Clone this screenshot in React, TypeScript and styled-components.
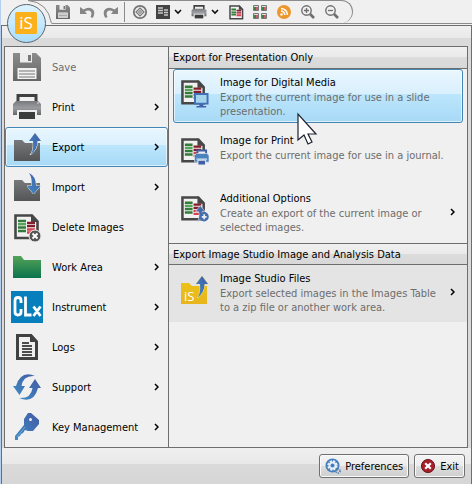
import React from 'react';
import styled, { createGlobalStyle, css } from 'styled-components';

const GlobalStyle = createGlobalStyle`
  * { box-sizing: border-box; }
  body { margin: 0; background: #f0f0f0; }
  body, button { font-family: "DejaVu Sans Condensed", "Noto Sans", sans-serif; font-size: 11px; color: #000; }
  svg { display: block; flex: none; }
`;

const line = '#6e6e6e';

const Window = styled.div`
  position: relative;
  display: flex;
  flex-direction: column;
  min-height: 100vh;
  background: #f0f0f0;
  border-left: 1px solid #b5d0ee;
  overflow: hidden;
`;

const TopBar = styled.header`
  display: flex;
  padding-left: 27px;
`;

const Toolbar = styled.div`
  flex: 1;
  height: 24px;
  border-bottom: 1px solid #8c8c8c;
`;

const Tools = styled.div`
  display: flex;
  align-items: center;
  width: 301px;
  height: 23px;
  padding-left: 3px;
  border: 1px solid #8c8c8c;
  border-left: 0;
  border-bottom: 0;
  border-radius: 0 12px 12px 0;
`;

const ToolButton = styled.button<{ $width?: number }>`
  display: flex;
  align-items: center;
  justify-content: flex-start;
  gap: 4px;
  width: ${(p) => p.$width ?? 24}px;
  height: 22px;
  padding: 0;
  border: 0;
  background: none;
`;

const Separator = styled.span`
  width: 1px;
  height: 20px;
  margin: 0 7px 0 0;
  background: #8a8a8a;
`;

const OrbButton = styled.button`
  position: absolute;
  left: 6px;
  top: 4px;
  padding: 0;
  border: 0;
  border-radius: 50%;
  background: none;
`;

const Panel = styled.div`
  display: flex;
  flex: 1;
  flex-direction: column;
  margin-top: 1px;
  padding: 0 3px 0 2px;
  border: 1px solid ${line};
  border-bottom: 0;
  background: linear-gradient(#f0f0f0, #e9e9e9 12px, #dadada 12px, #dadada 422px, #efefef 422px, #e9e9e9 438px, #dadada 438px, #d6d6d6);
`;

const MenuFrame = styled.main`
  display: grid;
  grid-template-columns: 164px 1fr;
  margin-top: 20px;
  border: 1px solid ${line};
  background: #f0f0f0;
`;

const Commands = styled.nav`
  border-right: 1px solid ${line};
`;

const highlighted = css`
  border-color: #4486b8;
  background: linear-gradient(#e9f6fe, #d9f0fd 46%, #bce6fd 46%, #a7d9f5);
  box-shadow: inset 0 0 0 1px #ffffff99;
`;

const CommandButton = styled.button<{ $active?: boolean }>`
  display: flex;
  align-items: center;
  width: 100%;
  height: 40px;
  padding: 0 8px 0 5px;
  border: 1px solid transparent;
  border-radius: 3px;
  background: none;
  text-align: left;
  ${(p) => p.$active && highlighted}
  &:disabled { color: #6d6d6d; }
`;

const CommandLabel = styled.span`
  flex: 1;
  padding-left: 9px;
`;

const SectionTitle = styled.h2<{ $later?: boolean }>`
  margin: 0;
  padding: 0 4px;
  height: ${(p) => (p.$later ? 22 : 22)}px;
  border-top: ${(p) => (p.$later ? 1 : 0)}px solid ${line};
  border-bottom: 1px solid ${line};
  background: linear-gradient(#f0f0f0, #eaeaea 48%, #dcdcdc 48%, #d8d8d8);
  font-size: 11px;
  font-weight: normal;
  line-height: 21px;
`;

const OptionList = styled.div<{ $shaded?: boolean }>`
  display: flex;
  flex-direction: column;
  gap: 4px;
  padding: 0 4px ${(p) => (p.$shaded ? 3 : 4)}px;
  background: ${(p) => (p.$shaded ? '#e4e4e4' : 'transparent')};
`;

const OptionButton = styled.button<{ $active?: boolean }>`
  display: flex;
  align-items: flex-start;
  width: 100%;
  height: 54px;
  padding: 5px 7px 0;
  border: 1px solid transparent;
  border-radius: 3px;
  background: none;
  text-align: left;
  ${(p) => p.$active && highlighted}
`;

const OptionIcon = styled.span`
  padding-top: 5px;
`;

const OptionText = styled.span`
  flex: 1;
  padding-left: 11px;
`;

const OptionTitle = styled.span`
  display: block;
  line-height: 16px;
`;

const OptionDescription = styled.span`
  display: block;
  max-width: 228px;
  line-height: 14px;
  color: #6d6d6d;
`;

const OptionArrow = styled.span`
  align-self: center;
  height: 14px;
`;

const Footer = styled.footer`
  display: flex;
  justify-content: flex-end;
  gap: 5px;
  padding: 6px 3px;
`;

const FooterButton = styled.button`
  display: flex;
  align-items: center;
  gap: 4px;
  height: 24px;
  padding: 0 5px;
  border: 1px solid #707070;
  border-radius: 3px;
  background: linear-gradient(#f4f4f4, #ececec 50%, #dddddd 50%, #cfcfcf);
  box-shadow: inset 0 0 0 1px #fafafa;
  white-space: nowrap;
`;

const Pointer = styled.svg`
  position: absolute;
  left: 295px;
  top: 112px;
  pointer-events: none;
`;

const Chevron = ({ down }: { down?: boolean }) =>
  down ? (
    <svg width="8" height="6" viewBox="0 0 8 6"><path d="M1 1l3 3 3-3" fill="none" stroke="#111" strokeWidth="1.6" /></svg>
  ) : (
    <svg width="5" height="8" viewBox="0 0 5 8"><path d="M1 1l3 3-3 3" fill="none" stroke="#000" strokeWidth="1.5" /></svg>
  );

const ToolbarCurve = () => (
  <svg width="24" height="24" viewBox="0 0 24 24"><path d="M0 .5H24M0 .5Q20 2 23.500 23.500" fill="none" stroke="#8c8c8c" /></svg>
);

const Floppy = ({ size = 32 }: { size?: number }) => (
  <svg width={size} height={size} viewBox="0 0 32 32">
    <defs><linearGradient id="floppy" x2="0" y2="1"><stop stopColor="#8b8b8b" /><stop offset="1" stopColor="#666" /></linearGradient></defs>
    <path d="M2 2h23l5 5v23H2z" fill="url(#floppy)" />
    <path d="M9 2h12v9.500H9z" fill="#ededed" />
    <path d="M17 4h3v6h-3z" fill="#777" />
    <path d="M6.500 17h19v11h-19z" fill="#f2f2f2" />
    <path d="M8 20h16M8 23h16M8 26h16" stroke="#777" strokeWidth="1.200" />
  </svg>
);

const Printer = ({ small }: { small?: boolean }) => (
  <svg width={small ? 16 : 32} height={small ? 16 : 32} viewBox={small ? '1 2 30 28' : '0 0 32 32'}>
    <defs><linearGradient id="printer" x2="0" y2="1"><stop stopColor="#78797c" /><stop offset=".5" stopColor="#9b9c9f" /><stop offset="1" stopColor="#66676a" /></linearGradient></defs>
    <path d="M7 11V4.500h18V11" fill="none" stroke="#404040" strokeWidth="3" />
    <path d="M2 13l3-3h22l3 3v11H2z" fill="url(#printer)" />
    <path d="M6 19h20v5H6z" fill="#eee" />
    <path d="M8 21h16v7H8z" fill="#3b3d3c" />
    <path d="M26 12h2" stroke="#ddd" />
  </svg>
);

const FolderBase = ({ kind }: { kind: 'gray' | 'green' | 'yellow' }) => {
  const stops = { gray: ['#77797b', '#545555'], green: ['#55a258', '#0b744d'], yellow: ['#ecc118', '#e8b51d'] }[kind];
  const wide = kind === 'green';
  return (
    <>
      <defs><linearGradient id={`folder-${kind}`} x2="0" y2="1"><stop stopColor={stops[0]} /><stop offset="1" stopColor={stops[1]} /></linearGradient></defs>
      <path d={wide ? 'M2 5h8l3 4h17v18H2z' : 'M3 9h8l3 3h15v18H3z'} fill={`url(#folder-${kind})`} />
    </>
  );
};

const BlueGradient = ({ id }: { id: string }) => (
  <defs><linearGradient id={id} x1="0" y1="1" x2="1" y2="0"><stop stopColor="#408bc5" /><stop offset="1" stopColor="#425ba4" /></linearGradient></defs>
);

const ExportFolder = ({ yellow }: { yellow?: boolean }) => (
  <svg width={yellow ? 28 : 32} height={yellow ? 28 : 32} viewBox={yellow ? '3 2 28 28' : '0 0 32 32'}>
    <FolderBase kind={yellow ? 'yellow' : 'gray'} />
    <BlueGradient id="export-arrow" />
    <path d="M19 24q4-4 3-14H18l6-8 6 8h-3.500q0 9-7.500 14z" fill="url(#export-arrow)" stroke={yellow ? '#f4dd91' : '#f0f0f0'} strokeWidth="1" paintOrder="stroke" />
    {yellow && <text x="6" y="27" fill="#fff" fontFamily="Open Sans" fontSize="13">iS</text>}
  </svg>
);

const ImportFolder = () => (
  <svg width="32" height="32" viewBox="0 0 32 32">
    <FolderBase kind="gray" />
    <BlueGradient id="import-arrow" />
    <path d="M18 2q7 3 7 13h4.500l-7 8-6.500-8h4.500q1-8-2.500-13z" fill="url(#import-arrow)" stroke="#f0f0f0" strokeWidth="1" paintOrder="stroke" />
  </svg>
);

type Badge = 'none' | 'delete' | 'screen' | 'printer' | 'add';

const documentView = { 16: '1 2 28 26', 28: '3 3 29 29', 32: '0 0 32 32' };

const ImageDocument = ({ badge = 'none', size = 28 }: { badge?: Badge; size?: 16 | 28 | 32 }) => (
  <svg width={size} height={size} viewBox={documentView[size]}>
    <path d="M4.500 4.500H21l5.500 6V27h-22z" fill="#f1f1f1" stroke="#474747" strokeWidth="2.600" />
    <path d="M20 3l8 8h-8z" fill="#474747" />
    <path d="M7 10h8M7 16.500h8M7 20h8" stroke="#337b39" strokeWidth="2.600" />
    <path d="M7 13.200h8" stroke="#57a45a" strokeWidth="2.400" />
    <path d="M16 12h8M16 15.200h8" stroke="#841c2a" strokeWidth="2.300" />
    <path d="M16 18.500h8M16 21.500h8" stroke="#da4050" strokeWidth="2.300" />
    {badge === 'delete' && <g><circle cx="24" cy="25" r="6" fill="#555" stroke="#eee" /><path d="M21.500 22.500l5 5m0-5l-5 5" stroke="#fff" strokeWidth="2" /></g>}
    {badge === 'screen' && <g><path d="M17.500 17.500h13v10h-13z" fill="#a5d4ed" stroke="#426fb4" strokeWidth="2" /><path d="M22 28h4v2h3v1.500H19V30h3z" fill="#425fac" /></g>}
    {badge === 'printer' && <g><path d="M20 20v-4h9v4" fill="#eee" stroke="#3e5fa4" strokeWidth="2" /><path d="M17 21l2-2h11l2 2v7H17z" fill="#4a83be" stroke="#f0f0f0" strokeWidth=".6" /><path d="M19 24h11v2H19z" fill="#a9cce8" /><path d="M20.500 26h8v5h-8z" fill="#405fa9" stroke="#f0f0f0" /></g>}
    {badge === 'add' && <g><path d="M20 30q3-7 1-11h-3l5-6 5 6h-3q1 7-5 11z" fill="#426bad" stroke="#eee" strokeWidth=".6" /><circle cx="27" cy="24.500" r="4.800" fill="#456eae" /><path d="M24.500 24.500h5m-2.500-2.500v5" stroke="#eee" strokeWidth="1.800" /></g>}
  </svg>
);

const Instrument = () => (
  <svg width="32" height="32" viewBox="0 0 32 32">
    <path d="M0 0h32v32H0z" fill="#087fbd" />
    <path d="M10 12V9.500q0-3-3-3t-3 3V21q0 3 3 3t3-3v-3M14.500 5.500v18.500h6M22.500 15.500l7 9.500m0-9.500l-7 9.500" fill="none" stroke="#fff" strokeWidth="2.800" />
  </svg>
);

const LogsIcon = () => (
  <svg width="32" height="32" viewBox="0 0 32 32">
    <path d="M6.500 4.500H20l5.500 6v17h-19z" fill="#f0f0f0" stroke="#414141" strokeWidth="3" />
    <path d="M19 3l8 8h-8z" fill="#414141" />
    <path d="M11 12h7M11 15h10M11 18h10M11 21h10M11 24h10" stroke="#151515" strokeWidth="1.400" />
  </svg>
);

const SupportIcon = () => (
  <svg width="32" height="32" viewBox="0 0 32 32">
    <BlueGradient id="support" />
    <g fill="url(#support)">
      <path d="M24 5Q10-1 5 15H2l6.500 9 5.500-9h-3.500Q12 4 24 5z" />
      <path d="M8 27q15 6 19-10h3l-6-9-6 9h3.500Q20 28 8 27z" />
    </g>
  </svg>
);

const KeyIcon = () => (
  <svg width="32" height="32" viewBox="0 0 32 32">
    <BlueGradient id="key" />
    <path fillRule="evenodd" d="M17 2h3l8 7v4l-6 7h-5l-3-1-2 3-2 1-1 2-2 1v3H4v-4l9-11V8zm2.500 5a1.500 1.500 0 100 3 1.500 1.500 0 000-3z" fill="url(#key)" />
    <path d="M6 26l8-10" stroke="#73a8d5" />
  </svg>
);

const UndoArrow = ({ flip }: { flip?: boolean }) => (
  <svg width="16" height="16" viewBox="0 0 16 16">
    <g transform={flip ? 'matrix(-1 0 0 1 16 0)' : undefined}>
      <path d="M1 3v7h7L6 7.500q4-2 6 .5 1 2-.5 5l2 1q3-4 1-8-4-4-10-.500z" fill="#858585" />
    </g>
  </svg>
);

const TargetIcon = () => (
  <svg width="16" height="16" viewBox="0 0 16 16" fill="none" stroke="#757575"><circle cx="8" cy="8" r="6.200" strokeWidth="1.800" /><path d="M8 4l4 4-4 4-4-4z" strokeWidth="1.200" /><circle cx="8" cy="8" r="1.300" /></svg>
);

const BlotIcon = () => (
  <svg width="14" height="14" viewBox="0 0 14 14"><path d="M0 0h14v14H0z" fill="#434343" /><path d="M2 3h5M2 5.500h5M2 8h5M8 5h4M8 7.500h4M8 10h4" stroke="#c9c9c9" strokeWidth="1.500" /></svg>
);

const ThumbnailsIcon = () => (
  <svg width="16" height="16" viewBox="0 0 16 16">
    {[[1, 1], [9, 1], [1, 9], [9, 9]].map(([x, y]) => (
      <g key={`${x}-${y}`}><path d={`M${x + 0.5} ${y + 0.5}h5v5h-5z`} fill="#ddd" stroke="#777" /><path d={`M${x + 2} ${y + 2}v3`} stroke="#398143" strokeWidth="2" /><path d={`M${x + 4} ${y + 2}v3`} stroke="#c13542" strokeWidth="1.500" /></g>
    ))}
  </svg>
);

const FeedIcon = () => (
  <svg width="16" height="16" viewBox="0 0 16 16"><circle cx="8" cy="8" r="7" fill="#ec962b" /><circle cx="5.500" cy="10.500" r="1.200" fill="#fff" /><path d="M5 7q3 0 4 4M5 4.500q6 .500 6.500 6.500" fill="none" stroke="#fff" strokeWidth="1.500" /></svg>
);

const Magnifier = ({ plus }: { plus?: boolean }) => (
  <svg width="16" height="16" viewBox="0 0 16 16" fill="none" stroke="#6f6f6f"><circle cx="6.500" cy="6.500" r="4.700" strokeWidth="1.400" /><path d="M10 10l4 4" strokeWidth="2.600" /><path d={plus ? 'M4 6.500h5M6.500 4v5' : 'M4 6.500h5'} strokeWidth="1.300" /></svg>
);

const Orb = () => (
  <svg width="40" height="40" viewBox="0 0 40 40">
    <defs><linearGradient id="orb" x2="0" y2="1"><stop stopColor="#dff3fe" /><stop offset=".5" stopColor="#c5e9fd" /><stop offset="1" stopColor="#a9dcf8" /></linearGradient></defs>
    <circle cx="19.500" cy="19.500" r="19" fill="url(#orb)" stroke="#5a666e" />
    <rect x="8" y="8" width="22" height="22" rx="1.500" fill="#fbb11c" />
    <text x="19" y="25" textAnchor="middle" fill="#fff" fontFamily="Open Sans" fontSize="17">iS</text>
  </svg>
);

const GearIcon = () => (
  <svg width="16" height="16" viewBox="0 0 16 16"><circle cx="7.500" cy="7.500" r="7" fill="#457fbd" /><circle cx="7.500" cy="7.500" r="4" fill="none" stroke="#e7f0f7" strokeWidth="2.400" strokeDasharray="2.100 1.040" /><circle cx="7.500" cy="7.500" r="3" fill="none" stroke="#e7f0f7" strokeWidth="1.800" /><circle cx="13" cy="13" r="2" fill="none" stroke="#567cae" strokeDasharray="1 1" strokeWidth="1.800" /></svg>
);

const ExitIcon = () => (
  <svg width="16" height="16" viewBox="0 0 16 16"><circle cx="8" cy="8" r="6.600" fill="#a61e28" stroke="#6d2026" /><path d="M5.200 5.200l5.600 5.600m0-5.600l-5.600 5.600" stroke="#fff" strokeWidth="2.200" /></svg>
);

const commands = [
  { label: 'Save', icon: <Floppy />, disabled: true },
  { label: 'Print', icon: <Printer />, submenu: true },
  { label: 'Export', icon: <ExportFolder />, submenu: true, active: true },
  { label: 'Import', icon: <ImportFolder />, submenu: true },
  { label: 'Delete Images', icon: <ImageDocument badge="delete" size={32} /> },
  { label: 'Work Area', icon: <svg width="32" height="32" viewBox="0 0 32 32"><FolderBase kind="green" /></svg>, submenu: true },
  { label: 'Instrument', icon: <Instrument />, submenu: true },
  { label: 'Logs', icon: <LogsIcon />, submenu: true },
  { label: 'Support', icon: <SupportIcon />, submenu: true },
  { label: 'Key Management', icon: <KeyIcon />, submenu: true },
];

type OptionProps = { title: string; description: string; icon: React.ReactNode; active?: boolean; submenu?: boolean };

const Option = ({ title, description, icon, active, submenu }: OptionProps) => (
  <OptionButton $active={active}>
    <OptionIcon>{icon}</OptionIcon>
    <OptionText>
      <OptionTitle>{title}</OptionTitle>
      <OptionDescription>{description}</OptionDescription>
    </OptionText>
    {submenu && <OptionArrow><Chevron /></OptionArrow>}
  </OptionButton>
);

export default function App() {
  return (
    <Window>
      <GlobalStyle />
      <TopBar>
        <ToolbarCurve />
        <Toolbar>
          <Tools>
            <ToolButton aria-label="Save"><Floppy size={16} /></ToolButton>
            <ToolButton aria-label="Undo"><UndoArrow /></ToolButton>
            <ToolButton $width={21} aria-label="Redo"><UndoArrow flip /></ToolButton>
            <Separator />
            <ToolButton aria-label="Acquire"><TargetIcon /></ToolButton>
            <ToolButton $width={35} aria-label="Display"><BlotIcon /><Chevron down /></ToolButton>
            <ToolButton $width={37} aria-label="Print"><Printer small /><Chevron down /></ToolButton>
            <ToolButton aria-label="Image"><ImageDocument size={16} /></ToolButton>
            <ToolButton aria-label="Thumbnails"><ThumbnailsIcon /></ToolButton>
            <ToolButton aria-label="Feed"><FeedIcon /></ToolButton>
            <ToolButton aria-label="Zoom in"><Magnifier plus /></ToolButton>
            <ToolButton aria-label="Zoom out"><Magnifier /></ToolButton>
          </Tools>
        </Toolbar>
      </TopBar>
      <Panel>
        <MenuFrame>
          <Commands>
            {commands.map((c) => (
              <CommandButton key={c.label} $active={c.active} disabled={c.disabled}>
                {c.icon}
                <CommandLabel>{c.label}</CommandLabel>
                {c.submenu && <Chevron />}
              </CommandButton>
            ))}
          </Commands>
          <section>
            <SectionTitle>Export for Presentation Only</SectionTitle>
            <OptionList>
              <Option active title="Image for Digital Media" description="Export the current image for use in a slide presentation." icon={<ImageDocument badge="screen" />} />
              <Option title="Image for Print" description="Export the current image for use in a journal." icon={<ImageDocument badge="printer" />} />
              <Option submenu title="Additional Options" description="Create an export of the current image or selected images." icon={<ImageDocument badge="add" />} />
            </OptionList>
            <SectionTitle $later>Export Image Studio Image and Analysis Data</SectionTitle>
            <OptionList $shaded>
              <Option submenu title="Image Studio Files" description="Export selected images in the Images Table to a zip file or another work area." icon={<ExportFolder yellow />} />
            </OptionList>
          </section>
        </MenuFrame>
        <Footer>
          <FooterButton><GearIcon />Preferences</FooterButton>
          <FooterButton><ExitIcon />Exit</FooterButton>
        </Footer>
      </Panel>
      <OrbButton aria-label="Application menu"><Orb /></OrbButton>
      <Pointer width="24" height="34" viewBox="0 0 24 34" aria-hidden="true">
        <path d="M2 2v26l6-5 4 9 4-2-4-8h8z" fill="#fff" stroke="#1c2230" strokeWidth="1.200" />
      </Pointer>
    </Window>
  );
}
